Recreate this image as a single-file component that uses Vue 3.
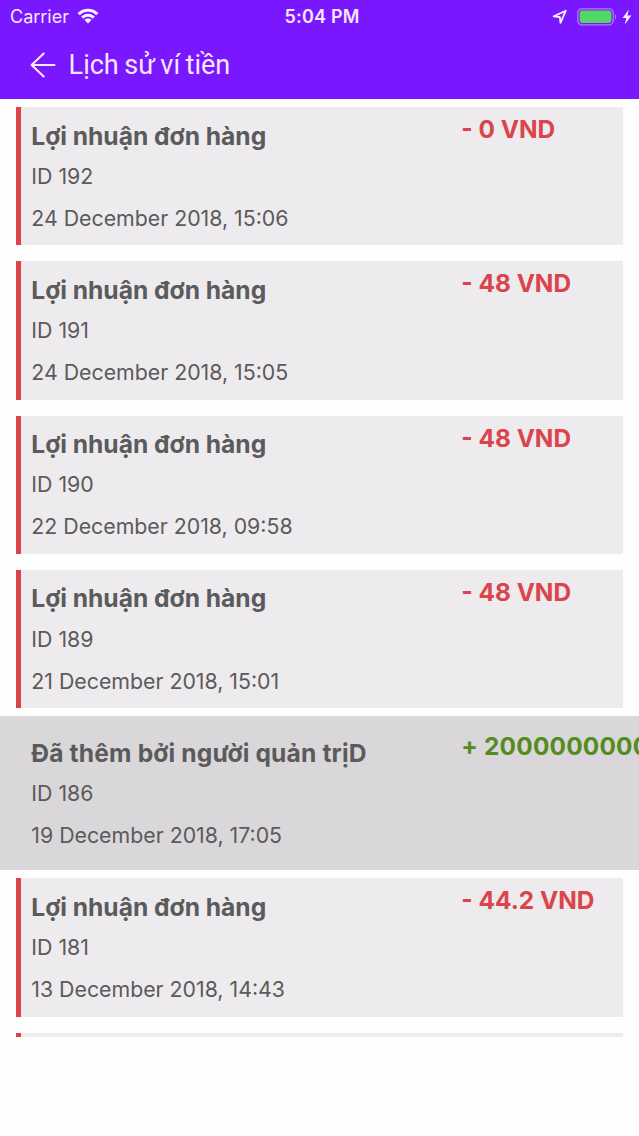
<template>
  <div class="screen">
    <header class="header">
      <div class="status-bar">
        <div class="status-left">
          <span class="carrier">Carrier</span>
          <svg class="wifi" viewBox="0 0 22 16" width="22" height="16">
            <path d="M0.6 5.1C6.2-0.8 15.8-0.8 21.4 5.1L19.2 7.2C14.8 2.6 7.2 2.6 2.8 7.2Z" />
            <path d="M4.2 8.6C8 4.7 14 4.7 17.8 8.6L15.6 10.7C13.1 8.1 8.9 8.1 6.4 10.7Z" />
            <path d="M7.6 12C9.4 10.1 12.6 10.1 14.4 12L11 15.4Z" />
          </svg>
        </div>
        <span class="time">5:04 PM</span>
        <div class="status-right">
          <svg class="location" viewBox="0 0 16 16" width="16" height="16">
            <path d="M1.7 7.4L13.8 1.7L8.5 13.8L7.8 8Z" />
          </svg>
          <svg class="battery" viewBox="0 0 41 18" width="41" height="18">
            <rect class="battery-frame" x="0.8" y="0.8" width="35.4" height="16" rx="4" />
            <rect class="battery-level" x="2.6" y="2.6" width="31.8" height="12.4" rx="2.4" />
            <path class="battery-tip" d="M38 6.2C39.6 7 39.6 10.6 38 11.4Z" />
          </svg>
          <svg class="bolt" viewBox="0 0 10 16" width="10" height="16">
            <path d="M6.8 0.4L0.6 9H4.3L2.8 15.6L9.4 6.4H5.4Z" />
          </svg>
        </div>
      </div>
      <div class="nav-bar">
        <svg class="back" viewBox="0 0 26 26" width="26" height="26">
          <path d="M13.7 1.6L1.6 13L13.7 24.4M1.6 13H24.4" />
        </svg>
        <h1 class="nav-title">Lịch sử ví tiền</h1>
      </div>
    </header>

    <main class="list">
      <div
        v-for="item in transactions"
        :key="item.id"
        class="row"
        :class="{ 'row-pressed': item.pressed }"
      >
        <div class="card">
          <template v-if="item.title">
            <div class="info">
              <h2 class="title">{{ item.title }}</h2>
              <p class="order-id">ID {{ item.id }}</p>
              <p class="date">{{ item.date }}</p>
            </div>
            <span class="amount" :class="item.pressed ? 'amount-in' : 'amount-out'">{{ item.amount }}</span>
          </template>
        </div>
      </div>
    </main>
  </div>
</template>

<script setup>
const transactions = [
  { id: 192, title: "Lợi nhuận đơn hàng", date: "24 December 2018, 15:06", amount: "- 0 VND" },
  { id: 191, title: "Lợi nhuận đơn hàng", date: "24 December 2018, 15:05", amount: "- 48 VND" },
  { id: 190, title: "Lợi nhuận đơn hàng", date: "22 December 2018, 09:58", amount: "- 48 VND" },
  { id: 189, title: "Lợi nhuận đơn hàng", date: "21 December 2018, 15:01", amount: "- 48 VND" },
  { id: 186, title: "Đã thêm bởi người quản trịD", date: "19 December 2018, 17:05", amount: "+ 2000000000", pressed: true },
  { id: 181, title: "Lợi nhuận đơn hàng", date: "13 December 2018, 14:43", amount: "- 44.2 VND" },
  { id: 180 },
];
</script>

<style>
body {
  margin: 0;
  background: #fefefe;
}
</style>

<style scoped>
.screen {
  width: 639px;
  height: 1136px;
  overflow: hidden;
  background: #fefefe;
  font-family: Inter, "Liberation Sans", sans-serif;
}
.header {
  height: 99px;
  background: #7918ff;
  color: #fbe6ff;
}
.status-bar {
  display: grid;
  grid-template-columns: 1fr auto 1fr;
  align-items: center;
  height: 32px;
  padding: 0 7px 0 10px;
}
.status-left,
.status-right {
  display: flex;
  align-items: center;
}
.status-right {
  justify-content: flex-end;
}
.carrier {
  padding-top: 1px;
  font-size: 18px;
  line-height: 32px;
}
.wifi {
  margin-left: 8px;
  margin-bottom: 1px;
  fill: #fff0ff;
}
.time {
  padding: 1px 0 0 2px;
  font-size: 18px;
  font-weight: 600;
  line-height: 32px;
  letter-spacing: 0.2px;
}
.location {
  margin-right: 9px;
  fill: none;
  stroke: #ffeaff;
  stroke-width: 1.8;
  stroke-linejoin: round;
}
.battery-frame {
  fill: none;
  stroke: #b47bf5;
  stroke-width: 1.3;
}
.battery-level {
  fill: #50d765;
}
.battery-tip {
  fill: #b47bf5;
}
.bolt {
  margin-left: 4px;
  fill: #fff0ff;
}
.nav-bar {
  display: flex;
  align-items: center;
  height: 66px;
  padding-left: 30px;
}
.back {
  fill: none;
  stroke: #ffe8ff;
  stroke-width: 2.1;
  stroke-linecap: round;
  stroke-linejoin: round;
}
.nav-title {
  margin: 0 0 0 12.6px;
  font-family: Roboto, sans-serif;
  font-size: 27px;
  font-weight: 400;
  line-height: 66px;
  word-spacing: -1.2px;
}
.list {
  height: 938px;
  overflow: hidden;
}
.row {
  box-sizing: border-box;
  height: 154.25px;
  padding: 8px 16px;
}
.row-pressed {
  background: #d9d7d9;
}
.card {
  display: flex;
  box-sizing: border-box;
  height: 138.25px;
  border-left: 5.5px solid #dc424a;
  background: #edebed;
}
.row-pressed .card {
  border-color: transparent;
  background: none;
}
.info {
  flex: none;
  width: 430px;
  padding: 12.6px 0 0 10.3px;
  color: #5b5a5c;
}
.title {
  height: 32px;
  margin: 0;
  font-size: 24.6px;
  font-weight: 700;
  line-height: 32px;
  white-space: nowrap;
}
.row-pressed .title {
  letter-spacing: 0.15px;
}
.order-id,
.date {
  margin: 0;
  font-size: 21.3px;
  line-height: 28px;
  white-space: nowrap;
}
.order-id {
  margin-top: 10.4px;
}
.date {
  margin-top: 14px;
}
.amount {
  padding-top: 6.1px;
  font-size: 24.4px;
  font-weight: 700;
  line-height: 32px;
  white-space: nowrap;
}
.amount-out {
  color: #db444a;
}
.amount-in {
  color: #568b1e;
  letter-spacing: 0.2px;
}
</style>
